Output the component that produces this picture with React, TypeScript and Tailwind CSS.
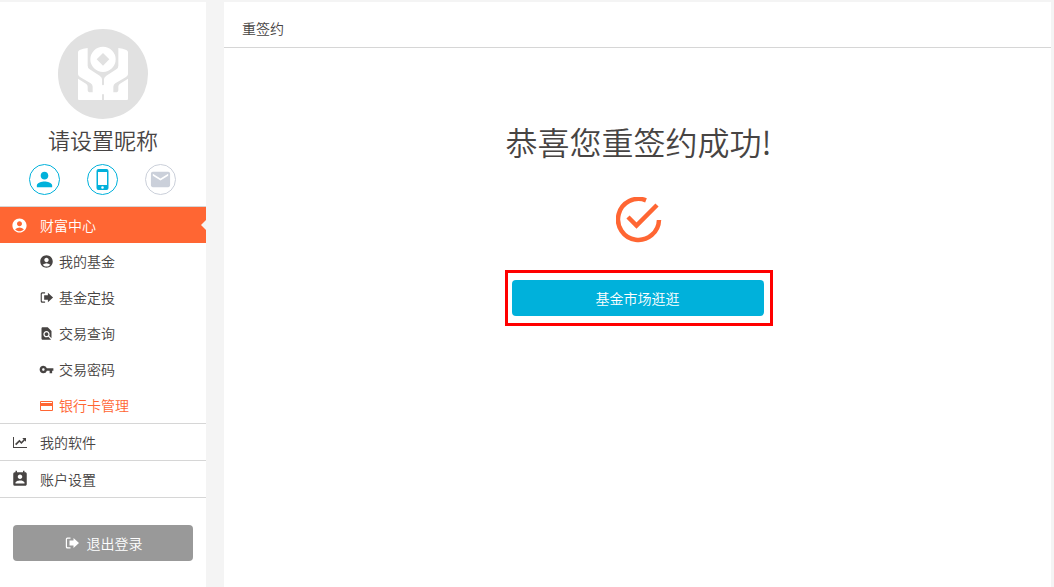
import React from 'react';
import {
  MdPerson,
  MdEmail,
  MdAccountCircle,
  MdFindInPage,
  MdVpnKey,
  MdPermContactCalendar,
} from 'react-icons/md';

interface IconProps {
  className?: string;
}

const PhoneIcon: React.FC<IconProps> = ({ className }) => (
  <svg viewBox="0 0 23 23" className={className} fill="currentColor" fillRule="evenodd" aria-hidden="true">
    <path d="M7.500 1h8q2 0 2 2v17q0 2-2 2h-8q-2 0-2-2V3q0-2 2-2zM7 4v13h9V4zM11.500 18.200a1.300 1.300 0 1 0 0 2.600a1.300 1.300 0 1 0 0-2.600z" />
  </svg>
);

const ExitIcon: React.FC<IconProps> = ({ className }) => (
  <svg viewBox="-1 -1 16 16" className={className} fill="currentColor" aria-hidden="true">
    <path d="M5.500 1.500v1.200H2.800q-.8 0-.8.8v7q0 .8.8.8h2.700v1.200H2.400Q.8 12.500.8 10.900V3.100Q.8 1.500 2.400 1.500z" />
    <path d="M8.500 2 14 7l-5.500 5V9.500H4.500v-5h4z" />
  </svg>
);

const CardIcon: React.FC<IconProps> = ({ className }) => (
  <svg viewBox="0 0 15 15" className={className} fill="currentColor" fillRule="evenodd" aria-hidden="true">
    <path d="M2 3h11q1 0 1 1v8q0 1-1 1H2q-1 0-1-1V4q0-1 1-1zM2 4v1h11V4zM2 8v4h11V8z" />
  </svg>
);

const ChartIcon: React.FC<IconProps> = ({ className }) => (
  <svg viewBox="-2 -2 18 18" className={className} fill="currentColor" aria-hidden="true">
    <path d="M0 2h1v10h13v1H0z" />
    <path d="M13 3v3.700L11.800 5.500 8.400 9 6.400 7.100 3.300 10.300 2 9l4.400-4.200 2 1.900 2.200-2.300L9.300 3z" />
  </svg>
);

const Logo: React.FC<IconProps> = ({ className }) => (
  <svg viewBox="24 27 270 270" className={className} aria-hidden="true">
    <circle cx="159" cy="162" r="135" fill="#e1e1e1" />
    {/* arms and base */}
    <path
      d="M84 97q0-5 5-7 10-5 24-6v53q0 7 6 11l30 19q7 5 7 10v16q0 3 3 3t3-3v-16q0-5 7-10l30-19q6-4 6-11V84q14 1 24 6 5 2 5 7v140q0 3-3 3H162v-15q0-3-3-3t-3 3v15H87q-3 0-3-3z"
      fill="#fff"
    />
    {/* cuts between the arms and the base */}
    <g fill="#e1e1e1">
      <path d="M84 163q0 4 6 8l32 19q6 4 6 10v17h-7q-8 0-8-8v-9q0-5-4-8l-25-16z" />
      <path d="M234 163q0 4-6 8l-32 19q-6 4-6 10v17h7q8 0 8-8v-9q0-5 4-8l25-16z" />
    </g>
    <path fillRule="evenodd" d="M159 80a38 38 0 1 1 0 76a38 38 0 1 1 0-76zM159 99l-19 19 19 19 19-19z" fill="#fff" />
  </svg>
);

const subItems = [
  { label: '我的基金', Icon: MdAccountCircle },
  { label: '基金定投', Icon: ExitIcon },
  { label: '交易查询', Icon: MdFindInPage },
  { label: '交易密码', Icon: MdVpnKey },
  { label: '银行卡管理', Icon: CardIcon, active: true },
];

const sections = [
  { label: '我的软件', Icon: ChartIcon },
  { label: '账户设置', Icon: MdPermContactCalendar },
];

const Sidebar: React.FC = () => (
  <aside className="w-[206px] shrink-0 bg-white">
    <div className="flex flex-col items-center pt-[27px] pb-[11px] border-b border-[#d6d6d6]">
      <Logo className="size-[90px]" />
      <p className="mt-0.5 text-[22px] leading-9">请设置昵称</p>
      <div className="mt-[7px] pr-0.5 flex gap-[27px]">
        <button type="button" aria-label="个人信息" className="size-[31px] rounded-full border border-[#00b1db] text-[#00b1db] flex items-center justify-center">
          <MdPerson className="size-[23px]" />
        </button>
        <button type="button" aria-label="手机" className="size-[31px] rounded-full border border-[#00b1db] text-[#00b1db] flex items-center justify-center">
          <PhoneIcon className="size-[23px]" />
        </button>
        <button type="button" aria-label="邮箱" className="size-[31px] rounded-full border border-[#cbd0da] text-[#cbd0da] flex items-center justify-center">
          <MdEmail className="size-[23px]" />
        </button>
      </div>
    </div>
    <nav>
      <a href="#wealth" className="relative flex items-center h-9 pl-[11px] bg-[#ff6633] text-white">
        <MdAccountCircle className="size-[17px]" />
        <span className="ml-3">财富中心</span>
        <svg viewBox="0 0 5 10" className="absolute right-0 top-[13px] w-[5px] h-[10px]" fill="#f4f4f4" aria-hidden="true">
          <path d="M5 0v10L0 5z" />
        </svg>
      </a>
      <ul className="border-b border-[#d6d6d6]">
        {subItems.map(({ label, Icon, active }) => (
          <li key={label}>
            <a href="#fund" className={active ? 'flex items-center h-9 pl-[39px] text-[#ff6633]' : 'flex items-center h-9 pl-[39px]'}>
              <Icon className="size-[15px]" />
              <span className="ml-[5px]">{label}</span>
            </a>
          </li>
        ))}
      </ul>
      {sections.map(({ label, Icon }) => (
        <a key={label} href="#section" className="flex items-center h-[37px] pl-[11px] border-b border-[#d6d6d6]">
          <Icon className="size-[18px]" />
          <span className="ml-[11px]">{label}</span>
        </a>
      ))}
    </nav>
    <div className="px-[13px] py-[27px]">
      <button type="button" className="w-full h-9 rounded bg-[#999999] text-white flex items-center justify-center gap-[7px]">
        <ExitIcon className="size-4" />
        退出登录
      </button>
    </div>
  </aside>
);

export default function App() {
  return (
    <div className="min-h-screen flex gap-[18px] pt-0.5 pr-[3px] bg-[#f4f4f4] text-[#474443] text-sm font-[350] font-['Noto_Sans_CJK_SC',sans-serif]">
      <Sidebar />
      <main className="flex-1 bg-white">
        <h1 className="h-[46px] pt-1.5 px-[18px] flex items-center border-b border-[#d6d6d6]">重签约</h1>
        <div className="flex flex-col items-center pl-0.5 pt-[69px]">
          <h2 className="text-[32px] leading-12">恭喜您重签约成功!</h2>
          <svg viewBox="0 0 46 46" className="mt-8 size-[46px]" fill="none" stroke="#ff6633" strokeWidth="4.500" aria-hidden="true">
            <path d="M30 3.300A20.500 20.500 0 1 0 43 23" />
            <path d="M12 20l8.500 8.500L41 8" />
          </svg>
          <div className="mt-[27px] w-[268px] border-3 border-[#ff0000] pl-1 pr-1.5 py-[7px]">
            <button type="button" className="w-full h-9 rounded bg-[#00b1db] text-white">
              基金市场逛逛
            </button>
          </div>
        </div>
      </main>
    </div>
  );
}
